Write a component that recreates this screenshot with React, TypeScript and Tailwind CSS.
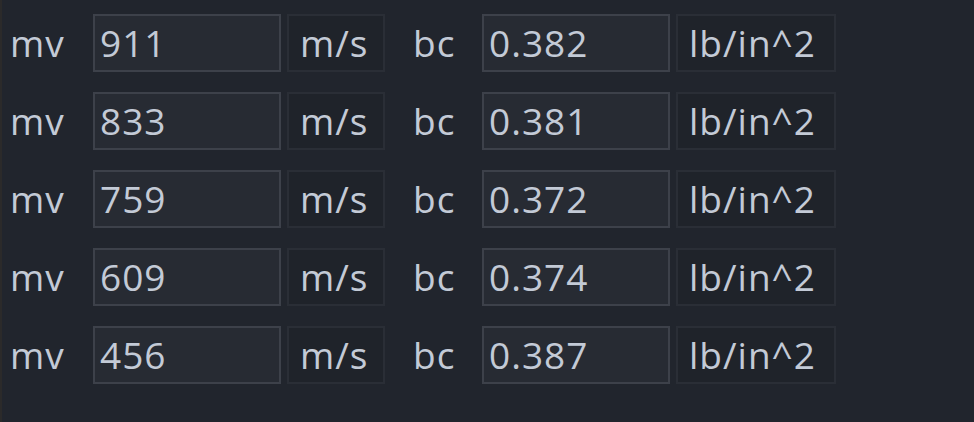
const rows = [
  { mv: "911", bc: "0.382" },
  { mv: "833", bc: "0.381" },
  { mv: "759", bc: "0.372" },
  { mv: "609", bc: "0.374" },
  { mv: "456", bc: "0.387" },
];

function Label({ text, className }: { text: string; className: string }) {
  return <span className={`shrink-0 ${className}`}>{text}</span>;
}

function Field({ value }: { value: string }) {
  return (
    <div className="flex h-[58px] w-[188px] shrink-0 items-center border-2 border-[#3d414a] bg-[#272b33] pl-[5px]">
      {value}
    </div>
  );
}

function Unit({ text, className }: { text: string; className: string }) {
  return (
    <div className={`ml-[6px] flex h-[58px] shrink-0 items-center border-2 border-[#2a2e36] bg-[#1f232a] pl-[11px] ${className}`}>
      {text}
    </div>
  );
}

export default function App() {
  return (
    <div className="h-[422px] w-[974px] overflow-hidden border-l-2 border-[#2b2a2a] bg-[#21252d] pt-[14px] font-['Open_Sans',sans-serif] text-[37px] tracking-[1px] text-[#c3cad6]">
      <div className="flex flex-col gap-[20px]">
        {rows.map((row, i) => (
          <div key={i} className="flex items-center">
            <Label text="mv" className="w-[91px] pl-[8px]" />
            <Field value={row.mv} />
            <Unit text="m/s" className="w-[98px]" />
            <Label text="bc" className="w-[97px] pl-[28px]" />
            <Field value={row.bc} />
            <Unit text="lb/in^2" className="w-[160px]" />
          </div>
        ))}
      </div>
    </div>
  );
}
